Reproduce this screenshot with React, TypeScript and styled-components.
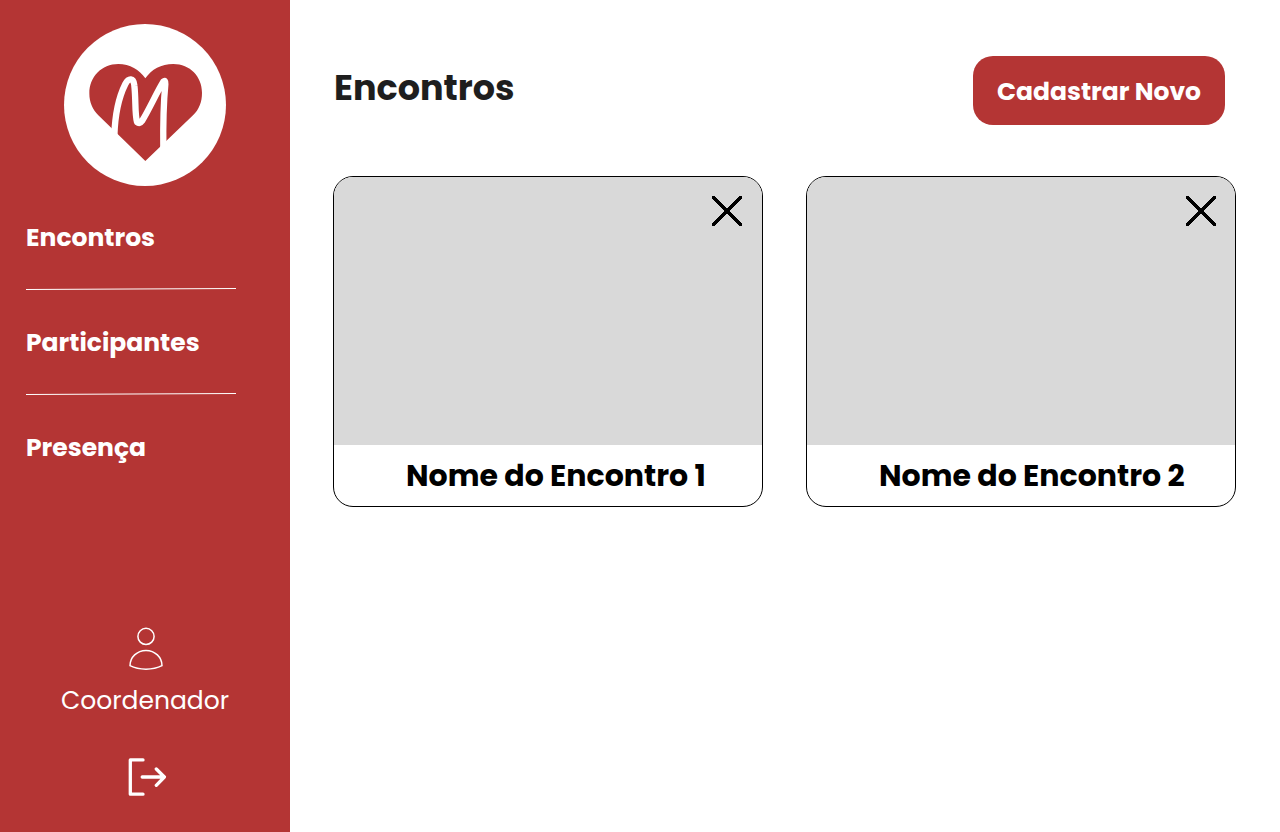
import React from "react";
import styled, { createGlobalStyle } from "styled-components";

const red = "#b43534";

const GlobalStyle = createGlobalStyle`
  * { box-sizing: border-box; }
  body {
    margin: 0;
    background: #fff;
    font-family: Poppins, Inter, "Open Sans", sans-serif;
  }
`;

const Page = styled.div`
  display: flex;
  height: 832px;
  overflow: hidden;
`;

const Sidebar = styled.aside`
  display: flex;
  flex-direction: column;
  align-items: center;
  width: 290px;
  flex-shrink: 0;
  padding: 24px 0 35px;
  background: ${red};
  color: #fff;
`;

const Logo = styled.svg`
  display: block;
  width: 162px;
  height: 162px;
  flex-shrink: 0;
`;

const Nav = styled.nav`
  display: flex;
  flex-direction: column;
  align-self: stretch;
  padding: 32px 0 0 26px;
`;

const NavLink = styled.a`
  height: 39px;
  line-height: 39px;
  font-size: 25px;
  font-weight: 700;
  white-space: nowrap;
`;

const Divider = styled.svg`
  display: block;
  width: 210px;
  height: 2px;
  margin: 31px 0 33px;
`;

const Account = styled.div`
  display: flex;
  flex-direction: column;
  align-items: center;
  margin-top: auto;
`;

const UserIcon = styled.svg`
  display: block;
  width: 36px;
  height: 44px;
  margin-left: 2px;
`;

const Role = styled.span`
  margin-top: 10px;
  height: 39px;
  line-height: 39px;
  font-size: 25px;
  font-weight: 400;
  white-space: nowrap;
`;

const LogoutIcon = styled.svg`
  display: block;
  width: 40px;
  height: 40px;
  margin: 37px 0 0 6px;
`;

const Main = styled.main`
  flex: 1;
  padding: 56px 44px 0 43px;
`;

const Header = styled.header`
  display: flex;
  justify-content: space-between;
  height: 69px;
  padding: 0 11px 0 1px;
`;

const Title = styled.h1`
  margin: 4px 0 0;
  height: 56px;
  line-height: 56px;
  font-size: 35px;
  font-weight: 700;
  color: #1e1e1e;
`;

const PrimaryButton = styled.button`
  width: 252px;
  height: 69px;
  padding: 3px 0 0;
  border: 0;
  border-radius: 20px;
  background: ${red};
  color: #fff;
  font: inherit;
  font-size: 25px;
  font-weight: 700;
  text-align: center;
  white-space: nowrap;
`;

const Cards = styled.section`
  display: flex;
  gap: 43px;
  margin-top: 51px;
`;

const Card = styled.article`
  display: flex;
  flex-direction: column;
  width: 430px;
  height: 331px;
  border: 1px solid #000;
  border-radius: 20px;
  overflow: hidden;
  background: #fff;
`;

const Cover = styled.div<{ $inset: number }>`
  display: flex;
  justify-content: flex-end;
  align-items: flex-start;
  height: 268px;
  padding: 18px ${(p) => p.$inset}px 0 0;
  background: #d9d9d9;
`;

const CloseIcon = styled.svg`
  display: block;
  width: 32px;
  height: 32px;
`;

const CardTitle = styled.h2`
  margin: 0;
  padding-left: 72px;
  height: 61px;
  line-height: 61px;
  font-size: 30px;
  font-weight: 700;
  color: #000;
  white-space: nowrap;
`;

const SlantedDivider = () => (
  <Divider viewBox="0 0 210 2">
    <path d="M0 1.5L210 .5" stroke="#fff" strokeWidth="1" />
  </Divider>
);

const meetings = [
  { name: "Nome do Encontro 1", inset: 19 },
  { name: "Nome do Encontro 2", inset: 18 },
];

export default function App() {
  return (
    <>
      <GlobalStyle />
      <Page>
        <Sidebar>
          <Logo viewBox="27 27 486 486">
            <circle cx="270" cy="270" r="243" fill="#fff" />
            <path
              d="M271 190C253 164 225 147 190 147C140 147 103 185 103 235C103 263 113 284 130 301L271 438L414 301C432 283 441 261 441 233C441 185 405 147 355 147C318 147 290 163 271 190Z"
              fill={red}
            />
            <path
              d="M178 362C180 300 192 245 211 207C221 188 236 188 238 211C243 256 239 295 246 321Q254 328 261 318C284 281 305 232 325 200Q332 194 331 207C325 270 324 330 325 402"
              fill="none"
              stroke="#fff"
              strokeWidth="19"
              strokeLinecap="round"
              strokeLinejoin="round"
            />
          </Logo>
          <Nav>
            <NavLink>Encontros</NavLink>
            <SlantedDivider />
            <NavLink>Participantes</NavLink>
            <SlantedDivider />
            <NavLink>Presença</NavLink>
          </Nav>
          <Account>
            <UserIcon viewBox="0 0 36 44" fill="none" stroke="#fff" strokeWidth="1.5">
              <circle cx="18" cy="9.4" r="8.1" />
              <path d="M2 38.7C2 30.2 9 23.4 18 23.4S34 30.2 34 38.7C25 43.3 11 43.3 2 38.7Z" strokeLinejoin="round" />
            </UserIcon>
            <Role>Coordenador</Role>
            <LogoutIcon
              viewBox="0 0 40 40"
              fill="none"
              stroke="#fff"
              strokeWidth="3.3"
              strokeLinecap="round"
              strokeLinejoin="round"
            >
              <path d="M15 2.9H2.3V37.2H15M14.2 20H36.4M28.3 12L36.4 20L28.3 28.3" />
            </LogoutIcon>
          </Account>
        </Sidebar>
        <Main>
          <Header>
            <Title>Encontros</Title>
            <PrimaryButton>Cadastrar Novo</PrimaryButton>
          </Header>
          <Cards>
            {meetings.map(({ name, inset }) => (
              <Card key={name}>
                <Cover $inset={inset}>
                  <CloseIcon viewBox="0 0 32 32">
                    <path
                      d="M2.7 2.7L29.3 29.3M29.3 2.7L2.7 29.3"
                      stroke="#000"
                      strokeWidth="3.7"
                      strokeLinecap="round"
                      shapeRendering="crispEdges"
                    />
                  </CloseIcon>
                </Cover>
                <CardTitle>{name}</CardTitle>
              </Card>
            ))}
          </Cards>
        </Main>
      </Page>
    </>
  );
}
